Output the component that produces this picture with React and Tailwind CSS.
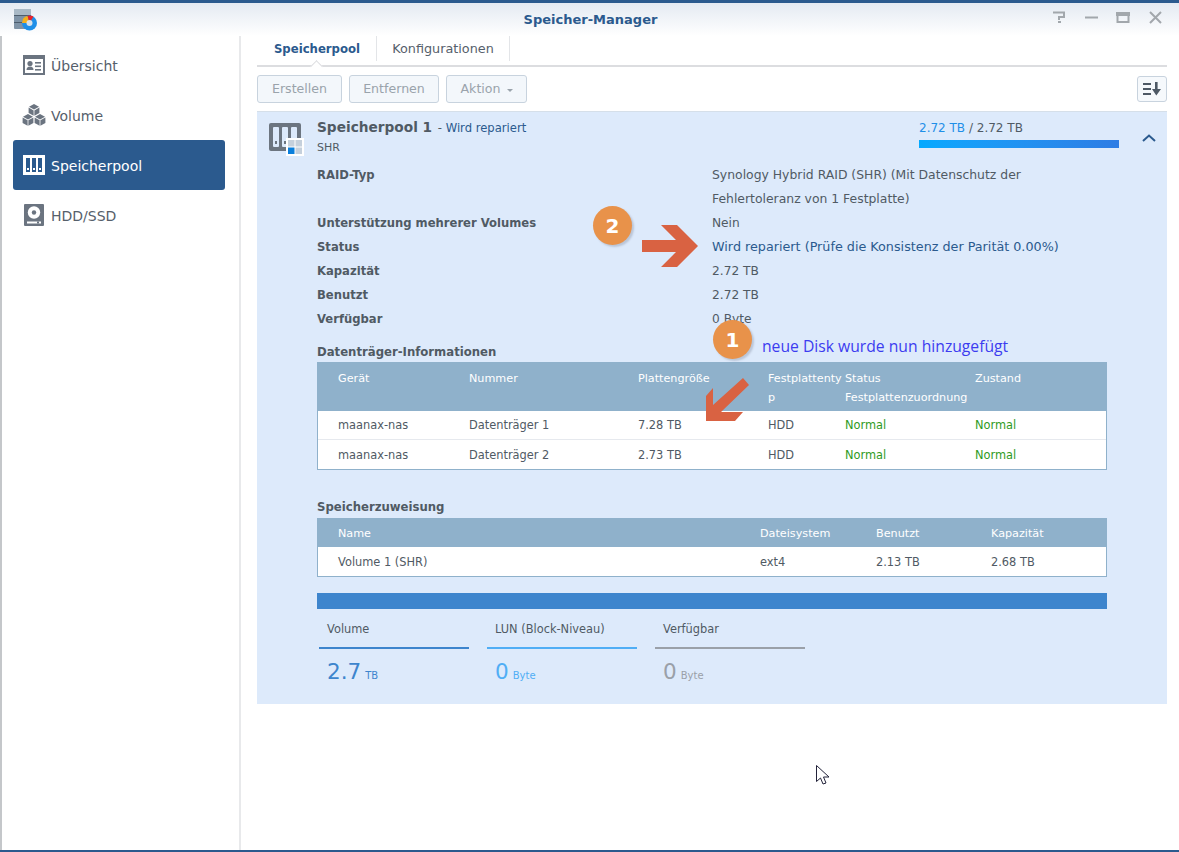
import React from 'react';

const navItems = [
    { label: 'Übersicht', icon: 'overview' },
    { label: 'Volume', icon: 'volume' },
    { label: 'Speicherpool', icon: 'pool', active: true },
    { label: 'HDD/SSD', icon: 'hdd' },
];

const infoRows = [
    { label: 'Unterstützung mehrerer Volumes', value: 'Nein' },
    { label: 'Status', value: 'Wird repariert (Prüfe die Konsistenz der Parität 0.00%)', link: true },
    { label: 'Kapazität', value: '2.72 TB' },
    { label: 'Benutzt', value: '2.72 TB' },
    { label: 'Verfügbar', value: '0 Byte' },
];

const disks = [
    ['maanax-nas', 'Datenträger 1', '7.28 TB', 'HDD', 'Normal', 'Normal'],
    ['maanax-nas', 'Datenträger 2', '2.73 TB', 'HDD', 'Normal', 'Normal'],
];

const NavIcon = ({ type, color }) => {
    if (type === 'overview') {
        return (
            <svg width="22" height="20" viewBox="0 0 22 20">
                <rect x="1" y="1" width="20" height="18" fill="none" stroke={color} strokeWidth="2" />
                <rect x="2" y="2" width="18" height="2" fill={color} />
                <circle cx="7" cy="8.5" r="2.6" fill={color} />
                <path d="M3.5 15 q0-3.5 3.5-3.5 t3.5 3.5z" fill={color} />
                <rect x="12" y="7" width="6" height="1.6" fill={color} />
                <rect x="12" y="10.5" width="6" height="1.6" fill={color} />
                <rect x="12" y="14" width="6" height="1.6" fill={color} />
            </svg>
        );
    }
    if (type === 'volume') {
        return (
            <svg width="24" height="24" viewBox="0 0 24 24" fill={color}>
                <path d="M12 1l5 2.8-5 2.8-5-2.8z" />
                <path d="M6.6 4.6l5 2.8v5.4l-5-2.9z" />
                <path d="M17.4 4.6l-5 2.8v5.4l5-2.9z" />
                <path d="M6 11l5 2.8-5 2.8-5-2.8z" />
                <path d="M.6 14.5l5 2.8v5.5l-5-2.9z" />
                <path d="M11.4 14.5l-5 2.8v5.5l5-2.9z" />
                <path d="M18 11l5 2.8-5 2.8-5-2.8z" />
                <path d="M12.6 14.5l5 2.8v5.5l-5-2.9z" />
                <path d="M23.4 14.5l-5 2.8v5.5l5-2.9z" />
            </svg>
        );
    }
    if (type === 'pool') {
        return (
            <svg width="22" height="20" viewBox="0 0 22 20">
                <rect width="22" height="20" fill={color} />
                <rect x="3" y="3" width="4" height="14" fill="#2b5a8e" />
                <rect x="9" y="3" width="4" height="14" fill="#2b5a8e" />
                <rect x="15" y="3" width="4" height="14" fill="#2b5a8e" />
                <rect x="4" y="13" width="2" height="2" fill={color} />
                <rect x="10" y="13" width="2" height="2" fill={color} />
                <rect x="16" y="13" width="2" height="2" fill={color} />
            </svg>
        );
    }
    return (
        <svg width="20" height="22" viewBox="0 0 20 22">
            <rect width="20" height="22" rx="1" fill={color} />
            <circle cx="10" cy="8.5" r="6.2" fill="#fff" />
            <circle cx="10" cy="8.5" r="2.2" fill={color} />
            <rect x="3" y="17.5" width="14" height="2" fill="#fff" />
            <rect x="13" y="17.5" width="2" height="2" fill={color} />
        </svg>
    );
};

const AppIcon = () => (
    <svg width="24" height="24" viewBox="0 0 24 24">
        <rect x="0" y="0" width="17" height="20" rx="1" fill="#7f93a6" />
        <rect x="0" y="0" width="17" height="6" fill="#a9b9c6" />
        <rect x="0" y="6" width="17" height="1" fill="#4d5d6d" />
        <rect x="0" y="13" width="17" height="1" fill="#4d5d6d" />
        <circle cx="15.5" cy="14" r="7.5" fill="#1e8fe8" />
        <path d="M15.5 14 L8 14 A7.5 7.5 0 0 1 13.5 6.8z" fill="#f5b01e" />
        <path d="M15.5 14 L13.5 6.8 A7.5 7.5 0 0 1 19.5 7.6z" fill="#e8232a" />
        <circle cx="15.5" cy="14" r="3" fill="#d9e2ea" />
    </svg>
);

const Badge = ({ n, className }) => (
    <div className={`absolute flex h-[39px] w-[39px] items-center justify-center rounded-full bg-[#e8924a] text-[20px] font-bold text-white shadow-[2px_2px_2px_rgba(120,130,150,0.35)] ${className}`}>
        {n}
    </div>
);

const App = () => {
    return (
        <div className="relative flex h-[852px] w-[1179px] flex-col overflow-hidden border-t-[3px] border-b-2 border-[#2b5a8e] bg-white font-['DejaVu_Sans',sans-serif] text-[12px] text-[#505a64]">
            {/* title bar */}
            <div className="relative flex h-[33px] shrink-0 items-center justify-center bg-gradient-to-b from-[#e4eaf2] to-white pl-[2px]">
                <div className="absolute left-[14px] top-[6px]"><AppIcon /></div>
                <span className="text-[13px] font-bold text-[#2b5a8e]">Speicher-Manager</span>
                <div className="absolute right-[16px] top-[8px] flex items-center gap-[17px] text-[#a2a7ac]">
                    <svg width="15" height="13" viewBox="0 0 15 13" fill="none" stroke="currentColor" strokeWidth="2">
                        <path d="M1 1.5h11v4.5h-5v3M6 11h3" />
                    </svg>
                    <svg width="15" height="13" viewBox="0 0 15 13"><rect x="1" y="5.5" width="13" height="2" fill="currentColor" /></svg>
                    <svg width="15" height="13" viewBox="0 0 15 13" fill="none" stroke="currentColor" strokeWidth="2">
                        <rect x="1.5" y="2" width="11" height="9" />
                        <rect x="1" y="2" width="12" height="2" fill="currentColor" />
                    </svg>
                    <svg width="15" height="13" viewBox="0 0 15 13" fill="none" stroke="currentColor" strokeWidth="2"><path d="M2 1l11 11M13 1L2 12" /></svg>
                </div>
            </div>

            <div className="flex min-h-0 flex-1">
                <div className="w-[2px] shrink-0 bg-[#c4c7ca]" />
                {/* sidebar */}
                <nav className="flex w-[239px] shrink-0 flex-col border-r-2 border-[#e8e9eb] pl-[11px] pr-[14px] pt-[4px]">
                    {navItems.map((item) => (
                        <div
                            key={item.label}
                            className={`flex h-[50px] items-center rounded-[3px] text-[14px] ${item.active ? 'bg-[#2b5a8e] text-white' : 'text-[#56606b]'}`}
                        >
                            <span className="flex w-[38px] shrink-0 justify-center pl-[4px]">
                                <NavIcon type={item.icon} color={item.active ? '#ffffff' : '#6b7480'} />
                            </span>
                            <span className="mt-[2px]">{item.label}</span>
                        </div>
                    ))}
                </nav>

                {/* main */}
                <main className="flex min-w-0 flex-1 flex-col pl-[16px] pr-[12px]">
                    <div className="relative flex h-[31px] shrink-0 items-start border-b-2 border-[#dcdde0]">
                        <div className="flex h-[25px] w-[120px] justify-center border-r border-[#e3e5e8] pl-[1px] pt-[5px] text-[11.7px] font-bold leading-[16px] text-[#2b5a8e]">
                            Speicherpool
                        </div>
                        <div className="flex h-[25px] w-[133px] justify-center border-r border-[#e3e5e8] pt-[5px] text-[12.8px] leading-[16px] text-[#56606b]">
                            Konfigurationen
                        </div>
                        <span className="absolute bottom-[-6px] left-[55px] h-[9px] w-[9px] rotate-45 border-l border-t border-[#dcdde0] bg-white" />
                    </div>

                    <div className="flex h-[44px] shrink-0 items-start justify-between pt-[8px]">
                        <div className="flex gap-[7px]">
                            {['Erstellen', 'Entfernen'].map((b) => (
                                <button key={b} className={`h-[28px] rounded-[3px] border border-[#c8d3de] bg-[#f3f7fb] pt-[1px] text-[12.6px] text-[#9aa3ab] ${b === 'Erstellen' ? 'w-[85px]' : 'w-[90px]'}`}>{b}</button>
                            ))}
                            <button className="flex h-[28px] w-[81px] items-center justify-center gap-[6px] rounded-[3px] border border-[#c8d3de] bg-[#f3f7fb] pt-[1px] text-[12.6px] text-[#9aa3ab]">
                                Aktion
                                <span className="mt-[2px] h-0 w-0 border-x-[3px] border-t-[3px] border-x-transparent border-t-[#9aa3ab]" />
                            </button>
                        </div>
                        <button className="mt-[1px] flex h-[26px] w-[30px] items-center justify-center rounded-[3px] border border-[#c8d3de] bg-[#f6f9fc]">
                            <svg width="18" height="14" viewBox="0 0 18 14" fill="#4e5965">
                                <rect x="0" y="1" width="8" height="2" />
                                <rect x="0" y="6" width="8" height="2" />
                                <rect x="0" y="11" width="8" height="2" />
                                <path d="M12 0h2.6v7H18l-4.7 6.5L9 7h3z" />
                            </svg>
                        </button>
                    </div>

                    {/* pool panel */}
                    <section className="h-[593px] shrink-0 border-t border-[#d5dfe9] bg-[#ddeafb]">
                        <div className="flex h-[51px]">
                            <div className="ml-[12px] mt-[11px] h-[33px] w-[35px] shrink-0">
                                <svg width="35" height="33" viewBox="0 0 35 33">
                                    <rect x="0" y="0" width="32" height="28" rx="2" fill="#6c7580" />
                                    <rect x="4" y="4" width="6" height="20" rx="1" fill="#ddeafb" />
                                    <rect x="13" y="4" width="6" height="20" rx="1" fill="#ddeafb" />
                                    <rect x="22" y="4" width="6" height="20" rx="1" fill="#ddeafb" />
                                    <rect x="6" y="18" width="2" height="3" fill="#6c7580" />
                                    <rect x="15" y="18" width="2" height="3" fill="#6c7580" />
                                    <rect x="17" y="15" width="18" height="18" fill="#fff" />
                                    <rect x="19" y="17" width="6.5" height="6.5" fill="#c5d0dc" />
                                    <rect x="26.5" y="17" width="6.5" height="6.5" fill="#c5d0dc" />
                                    <rect x="19" y="24.5" width="6.5" height="6.5" fill="#0a7fdc" />
                                    <rect x="26.5" y="24.5" width="6.5" height="6.5" fill="#c5d0dc" />
                                </svg>
                            </div>
                            <div className="ml-[13px] mt-[5px] flex-1">
                                <div className="h-[22px] leading-[20px]">
                                    <span className="text-[13.7px] font-bold text-[#505a64]">Speicherpool 1</span>
                                    <span className="ml-[2px] text-[11.6px] text-[#2b5a8e]"><span className="text-[#505a64]"> - </span>Wird repariert</span>
                                </div>
                                <div className="text-[11px] leading-[18px]">SHR</div>
                            </div>
                            <div className="mt-[7px] w-[200px] shrink-0">
                                <div className="h-[21px] leading-[18px]">
                                    <span className="text-[#1e8fe8]">2.72 TB</span> / 2.72 TB
                                </div>
                                <div className="h-[8px] bg-gradient-to-r from-[#03a9ff] to-[#2d7ce4]" />
                            </div>
                            <div className="flex w-[48px] shrink-0 justify-center pl-[12px] pt-[22px]">
                                <svg width="14" height="9" viewBox="0 0 14 9" fill="none" stroke="#2b5a8e" strokeWidth="2"><path d="M1 7l6-5.5L13 7" /></svg>
                            </div>
                        </div>

                        <div className="pl-[60px] leading-[24px]">
                            <div className="flex">
                                <div className="w-[395px] shrink-0 text-[11.6px] font-bold">RAID-Typ</div>
                                <div className="text-[12.4px]">Synology Hybrid RAID (SHR) (Mit Datenschutz der<br />Fehlertoleranz von 1 Festplatte)</div>
                            </div>
                            {infoRows.map((row) => (
                                <div key={row.label} className="flex">
                                    <div className="w-[395px] shrink-0 text-[11.6px] font-bold">{row.label}</div>
                                    <div className={row.link ? 'text-[12.75px] text-[#2b5a8e]' : 'text-[12.2px]'}>{row.value}</div>
                                </div>
                            ))}
                        </div>

                        <div className="ml-[60px] mr-[60px] mt-[12px]">
                            <h3 className="h-[18px] text-[11.7px] font-bold leading-[18px]">Datenträger-Informationen</h3>
                            <div className="mt-[1px] border border-t-0 border-[#8fb1cb] bg-white">
                                <div className="grid h-[49px] grid-cols-[130px_169px_130px_77px_130px_1fr] bg-[#8fb1cb] pt-[7px] text-[11.2px] leading-[19px] text-white">
                                    <div className="pl-[20px]">Gerät</div>
                                    <div className="pl-[21px]">Nummer</div>
                                    <div className="pl-[21px]">Plattengröße</div>
                                    <div className="whitespace-nowrap pl-[21px]">Festplattenty<br />p</div>
                                    <div className="whitespace-nowrap pl-[21px]">Status<br />Festplattenzuordnung</div>
                                    <div className="pl-[21px]">Zustand</div>
                                </div>
                                {disks.map((d, i) => (
                                    <div key={d[1]} className={`grid h-[29px] grid-cols-[130px_169px_130px_77px_130px_1fr] items-center pt-[2px] text-[11.4px] ${i === 0 ? 'border-b border-[#e6e9ee]' : ''}`}>
                                        <div className="pl-[20px]">{d[0]}</div>
                                        <div className="pl-[21px]">{d[1]}</div>
                                        <div className="pl-[21px]">{d[2]}</div>
                                        <div className="pl-[21px]">{d[3]}</div>
                                        <div className="pl-[21px] text-[#2f9b1e]">{d[4]}</div>
                                        <div className="pl-[21px] text-[#2f9b1e]">{d[5]}</div>
                                    </div>
                                ))}
                            </div>

                            <h3 className="mt-[28px] h-[18px] text-[11.7px] font-bold leading-[18px]">Speicherzuweisung</h3>
                            <div className="mt-[2px] border border-t-0 border-[#8fb1cb] bg-white text-[11.4px]">
                                <div className="grid h-[29px] grid-cols-[442px_116px_115px_1fr] items-center bg-[#8fb1cb] pt-[4px] text-[11.2px] text-white">
                                    <div className="pl-[20px]">Name</div>
                                    <div>Dateisystem</div>
                                    <div>Benutzt</div>
                                    <div>Kapazität</div>
                                </div>
                                <div className="grid h-[29px] grid-cols-[442px_116px_115px_1fr] items-center pt-[3px]">
                                    <div className="pl-[20px]">Volume 1 (SHR)</div>
                                    <div>ext4</div>
                                    <div>2.13 TB</div>
                                    <div>2.68 TB</div>
                                </div>
                            </div>

                            <div className="mt-[16px] h-[16px] bg-[#3d85cd]" />
                            <div className="mt-[10px] flex gap-[18px] pl-[2px]">
                                <div className="w-[150px]">
                                    <div className="h-[30px] border-b-2 border-[#3d85cd] pl-[8px] pt-[1px] text-[11.4px] leading-[18px]">Volume</div>
                                    <div className="mt-[7px] pl-[8px] text-[#3d85cd]"><span className="text-[21.5px]">2.7</span><span className="ml-[4px] text-[10px]">TB</span></div>
                                </div>
                                <div className="w-[150px]">
                                    <div className="h-[30px] border-b-2 border-[#50aef5] pl-[8px] pt-[1px] text-[11.4px] leading-[18px]">LUN (Block-Niveau)</div>
                                    <div className="mt-[7px] pl-[8px] text-[#50aef5]"><span className="text-[21.5px]">0</span><span className="ml-[4px] text-[10px]">Byte</span></div>
                                </div>
                                <div className="w-[150px]">
                                    <div className="h-[30px] border-b-2 border-[#9aa0a8] pl-[8px] pt-[1px] text-[11.4px] leading-[18px]">Verfügbar</div>
                                    <div className="mt-[7px] pl-[8px] text-[#9aa0a8]"><span className="text-[21.5px]">0</span><span className="ml-[4px] text-[10px]">Byte</span></div>
                                </div>
                            </div>
                        </div>
                    </section>
                </main>
            </div>

            {/* annotations on top of the screenshot */}
            <Badge n="2" className="left-[593px] top-[203px]" />
            <Badge n="1" className="left-[713px] top-[317px]" />
            <svg className="absolute left-[640px] top-[221px]" width="60" height="48" viewBox="0 0 60 48" fill="#d96242">
                <path d="M2 16h34L21 1H37L58 22 37 43H21L36 28H2z" />
            </svg>
            <svg className="absolute left-[704px] top-[375px]" width="46" height="46" viewBox="0 0 46 46" fill="#d96242">
                <path d="M2 43V18L9 10V27L39 0L45 7L17 34H39L31 43z" />
            </svg>
            <div className="absolute left-[762px] top-[332px] font-['Open_Sans',sans-serif] text-[15.7px] text-[#3c3cf0]">neue Disk wurde nun hinzugefügt</div>
            <svg className="absolute left-[815px] top-[761px]" width="15" height="22" viewBox="0 0 15 22" fill="#fff" stroke="#23233a" strokeWidth="1">
                <path d="M1.5 1.5v16l4-3.5 2.5 6 3-1-2.5-6h5.5z" />
            </svg>
        </div>
    );
};

export default App;
